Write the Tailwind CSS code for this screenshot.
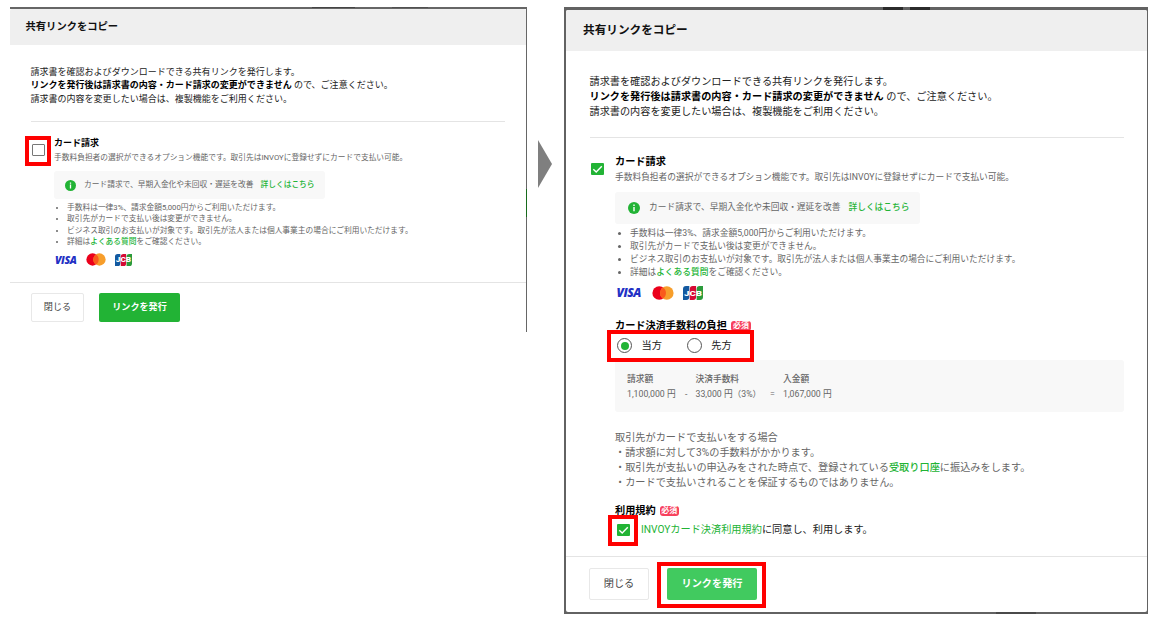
<!DOCTYPE html>
<html lang="ja">
<head>
    <meta charset="UTF-8">
    <meta name="viewport" content="width=device-width, initial-scale=1.0">
    <title>共有リンクをコピー</title>
    <script src="https://cdn.jsdelivr.net/npm/@tailwindcss/browser@4"></script>
</head>
<body class="bg-white font-[Roboto,'Noto_Sans_CJK_JP',sans-serif] text-[#222] w-[1153px] h-[618px] overflow-hidden whitespace-nowrap">
    <!-- Shared logos -->
    <svg class="hidden">
        <symbol id="mastercard" viewBox="0 0 22 14">
            <circle cx="7.2" cy="7" r="6.8" fill="#eb001b"/>
            <circle cx="14.8" cy="7" r="6.8" fill="#f79e2b"/>
            <path d="M11 1.4a6.8 6.8 0 0 1 0 11.2a6.8 6.8 0 0 1 0-11.2z" fill="#fa5a1c"/>
        </symbol>
        <symbol id="jcb" viewBox="0 0 20 14">
            <path d="M3 0h3.300v11a3 3 0 0 1-3 3H0V3a3 3 0 0 1 3-3z" fill="#1359a0"/>
            <path d="M9.800 0h3.300v11a3 3 0 0 1-3 3H6.800V3a3 3 0 0 1 3-3z" fill="#d50a34"/>
            <path d="M16.600 0H20v11a3 3 0 0 1-3 3h-3.400V3a3 3 0 0 1 3-3z" fill="#2b9b3c"/>
            <text x="10" y="9.600" text-anchor="middle" textLength="18" lengthAdjust="spacingAndGlyphs" font-family="Roboto" font-size="7.500" font-weight="900" fill="#fff">JCB</text>
        </symbol>
        <symbol id="info" viewBox="0 0 12 12">
            <circle cx="6" cy="6" r="6" fill="#22b335"/>
            <path d="M5.300 2.600h1.400v1.400H5.300zM5.300 5h1.400v4.200H5.300z" fill="#fff"/>
        </symbol>
        <symbol id="check" viewBox="0 0 13 12">
            <rect width="13" height="12" rx="1" fill="#22b335"/>
            <path d="M2.300 6.200l2.900 2.800L10.800 3.300" fill="none" stroke="#fff" stroke-width="1.400"/>
        </symbol>
    </svg>

    <main class="relative flex items-start pt-[7px] pl-[10px]">
        <!-- Before: option unchecked -->
        <section class="relative w-[517px] h-[325px] border-t-2 border-r border-[#666]">
            <div class="absolute -top-[2px] left-[302px] w-[43px] h-px bg-[#444]"></div>
            <div class="absolute -top-[2px] left-[382px] w-[36px] h-px bg-[#505050]"></div>
            <div class="absolute top-[180px] -right-px w-px h-[28px] bg-[#176b1c]"></div>
            <header class="h-[36px] bg-[#efefef] rounded-t-[2px] pl-[15.5px] flex items-center text-[10.3px] font-bold text-[#111]">共有リンクをコピー</header>
            <div class="pt-[21px] pl-[21px] pr-[21px]">
                <div class="text-[9.03px] leading-[13.3px] h-[40px] -ml-[0.5px]">
                    <p>請求書を確認およびダウンロードできる共有リンクを発行します。</p>
                    <p><b class="text-black">リンクを発行後は請求書の内容・カード請求の変更ができません</b> ので、ご注意ください。</p>
                    <p>請求書の内容を変更したい場合は、複製機能をご利用ください。</p>
                </div>
                <div class="mt-[15px] h-px bg-[#e4e4e4]"></div>
                <div class="mt-[15px] flex">
                    <div class="w-[23px] pt-[7px]"><div class="ml-px w-[13px] h-[12px] border border-[#777] rounded-[1px]"></div></div>
                    <div class="text-[7.73px] text-[#666]">
                        <h3 class="text-[9px] leading-[13px] font-bold text-black">カード請求</h3>
                        <p class="pt-px leading-[14px] h-[21px]">手数料負担者の選択ができるオプション機能です。取引先はINVOYに登録せずにカードで支払い可能。</p>
                        <div class="w-[271px] h-[28px] bg-[#f8f8f8] rounded-[3px] flex items-center pl-[11px]">
                            <svg class="w-[11px] h-[11px] mr-2"><use href="#info"/></svg>
                            <span>カード請求で、早期入金化や未回収・遅延を改善</span>
                            <a class="ml-[7px] font-medium text-[#22b335]">詳しくはこちら</a>
                        </div>
                        <ul class="list-disc pl-[13px] mt-[3px] leading-[11.3px]">
                            <li>手数料は一律3%、請求金額5,000円からご利用いただけます。</li>
                            <li>取引先がカードで支払い後は変更ができません。</li>
                            <li>ビジネス取引のお支払いが対象です。取引先が法人または個人事業主の場合にご利用いただけます。</li>
                            <li>詳細は<a class="font-medium text-[#22b335]">よくある質問</a>をご確認ください。</li>
                        </ul>
                        <div class="mt-[6px] flex items-center h-[13px]">
                            <span class="w-[27px] pl-px font-['Open_Sans',sans-serif] text-[10.5px] leading-[16px] font-extrabold italic tracking-[-0.4px] text-[#2230c4]">VISA</span>
                            <svg class="w-[20px] h-[13px] ml-[5px]"><use href="#mastercard"/></svg>
                            <svg class="w-[17px] h-[12px] ml-[9px]"><use href="#jcb"/></svg>
                        </div>
                    </div>
                </div>
            </div>
            <footer class="mt-[16px] h-[50px] border-t border-[#e4e4e4] flex pt-[10px] pl-[21px] text-[9.1px]">
                <button class="w-[53px] h-[29px] border border-[#e8e8e8] rounded-[2px] text-[#444]">閉じる</button>
                <button class="ml-[15px] w-[81px] h-[29px] rounded-[2px] bg-[#22b335] text-white font-bold">リンクを発行</button>
            </footer>
        </section>

        <svg class="ml-[11px] mt-[133px] w-[14px] h-[48px]" viewBox="0 0 14 48"><path d="M0 0l14 24L0 48z" fill="#7f7f7f"/></svg>

        <!-- After: option checked -->
        <section class="relative ml-[12px] w-[584px] h-[607px] bg-[#626262] pt-[3px] pl-[2px] pr-px pb-[2px]">
            <div class="absolute top-0 left-[319px] w-[20px] h-[3px] bg-[#2b2b2b]"></div>
            <div class="absolute top-0 left-[346px] w-[20px] h-[3px] bg-[#2b2b2b]"></div>
            <div class="absolute bottom-0 left-[432px] w-[40px] h-[2px] bg-[#4a4a4a]"></div>
            <div class="bg-white h-[602px] rounded-[2px] overflow-hidden">
                <header class="h-[41px] bg-[#efefef] pl-[17px] flex items-center text-[11.65px] font-bold text-[#111]">共有リンクをコピー</header>
                <div class="pt-[23px] pl-[24px] pr-[23px] text-[10.16px]">
                    <div class="leading-[15.2px] h-[46px] -ml-[0.5px]">
                        <p>請求書を確認およびダウンロードできる共有リンクを発行します。</p>
                        <p><b class="text-black">リンクを発行後は請求書の内容・カード請求の変更ができません</b> ので、ご注意ください。</p>
                        <p>請求書の内容を変更したい場合は、複製機能をご利用ください。</p>
                    </div>
                    <div class="mt-[17px] h-px bg-[#e4e4e4]"></div>
                    <div class="mt-[16px] flex">
                        <div class="w-[25px] pt-[9px]"><svg class="ml-px w-[13px] h-[12px]"><use href="#check"/></svg></div>
                        <div class="flex-1 text-[8.72px] text-[#666]">
                            <h3 class="text-[10.18px] leading-[15px] font-bold text-black">カード請求</h3>
                            <p class="leading-[16px] h-[23px]">手数料負担者の選択ができるオプション機能です。取引先はINVOYに登録せずにカードで支払い可能。</p>
                            <div class="w-[305px] h-[32px] bg-[#f8f8f8] rounded-[3px] flex items-center pl-[13px]">
                                <svg class="w-[12px] h-[12px] mr-[9px]"><use href="#info"/></svg>
                                <span>カード請求で、早期入金化や未回収・遅延を改善</span>
                                <a class="ml-2 font-medium text-[#22b335]">詳しくはこちら</a>
                            </div>
                            <ul class="list-disc pl-[15px] mt-[3px] leading-[12.9px]">
                                <li>手数料は一律3%、請求金額5,000円からご利用いただけます。</li>
                                <li>取引先がカードで支払い後は変更ができません。</li>
                                <li>ビジネス取引のお支払いが対象です。取引先が法人または個人事業主の場合にご利用いただけます。</li>
                                <li>詳細は<a class="font-medium text-[#22b335]">よくある質問</a>をご確認ください。</li>
                            </ul>
                            <div class="mt-[7px] flex items-center h-[14px]">
                                <span class="w-[32px] pl-[1.5px] font-['Open_Sans',sans-serif] text-[12px] leading-[18px] font-extrabold italic tracking-[-0.5px] text-[#2230c4]">VISA</span>
                                <svg class="w-[22px] h-[14px] ml-[5px]"><use href="#mastercard"/></svg>
                                <svg class="w-[20px] h-[14px] ml-[9px]"><use href="#jcb"/></svg>
                            </div>

                            <h3 class="mt-[18px] flex items-center h-4 text-[10.18px] font-bold text-black">カード決済手数料の負担<span class="ml-1 w-[20px] h-[10px] rounded-[3px] bg-[#f7405c] text-white text-[8px] leading-[10px] text-center">必須</span></h3>
                            <div class="flex items-center h-[24px] text-[10.18px] text-[#222]">
                                <span class="ml-[2px] w-[15px] h-[15px] rounded-full border border-[#555] flex items-center justify-center"><i class="w-[8px] h-[8px] rounded-full bg-[#22b335]"></i></span>
                                <span class="ml-[9.5px]">当方</span>
                                <span class="ml-[25px] w-[15px] h-[15px] rounded-full border border-[#555]"></span>
                                <span class="ml-[9.5px]">先方</span>
                            </div>
                            <div class="mt-[2px] h-[52px] bg-[#f8f8f8] rounded-[3px] pl-[12px] pt-[12px] grid grid-cols-[58px_10px_75px_13px_1fr] leading-[15.5px] content-start">
                                <span class="font-medium">請求額</span><span></span><span class="ml-[0.5px] font-medium">決済手数料</span><span></span><span class="font-medium">入金額</span>
                                <span>1,100,000 円</span><span>-</span><span class="ml-[0.5px]">33,000 円（3%）</span><span>=</span><span>1,067,000 円</span>
                            </div>
                            <div class="mt-[18px] text-[10.18px] leading-[15.2px] h-[61px]">
                                <p>取引先がカードで支払いをする場合</p>
                                <p>・請求額に対して3%の手数料がかかります。</p>
                                <p>・取引先が支払いの申込みをされた時点で、登録されている<a class="font-medium text-[#22b335]">受取り口座</a>に振込みをします。</p>
                                <p>・カードで支払いされることを保証するものではありません。</p>
                            </div>
                            <h3 class="mt-[12px] flex items-center h-4 text-[10.18px] font-bold text-black">利用規約<span class="ml-1 w-[19px] h-[10px] rounded-[3px] bg-[#f7405c] text-white text-[8px] leading-[10px] text-center">必須</span></h3>
                            <div class="mt-[3px] flex items-center h-[16px] text-[10.18px] text-[#222]">
                                <svg class="ml-[2px] mr-[11px] w-[13px] h-[12px]"><use href="#check"/></svg>
                                <a class="text-[#22b335]">INVOYカード決済利用規約</a>に同意し、利用します。
                            </div>
                        </div>
                    </div>
                </div>
                <footer class="mt-[18px] border-t border-[#e4e4e4] flex pt-[11.5px] pl-[23px] text-[10.18px]">
                    <button class="w-[60px] h-[32px] border border-[#e8e8e8] rounded-[2px] text-[#444]">閉じる</button>
                    <button class="ml-[18px] w-[90px] h-[32px] rounded-[2px] bg-[#41ca5f] text-white font-bold">リンクを発行</button>
                </footer>
            </div>
        </section>

        <!-- Red callouts -->
        <div class="absolute left-[25px] top-[136px] w-[26px] h-[30px] border-4 border-[#f00]"></div>
        <div class="absolute left-[607px] top-[330px] w-[147px] h-[32px] border-4 border-[#f00]"></div>
        <div class="absolute left-[608px] top-[515px] w-[30px] h-[31px] border-4 border-[#f00]"></div>
        <div class="absolute left-[657px] top-[562px] w-[109px] h-[46px] border-4 border-[#f00]"></div>
    </main>
</body>
</html>
